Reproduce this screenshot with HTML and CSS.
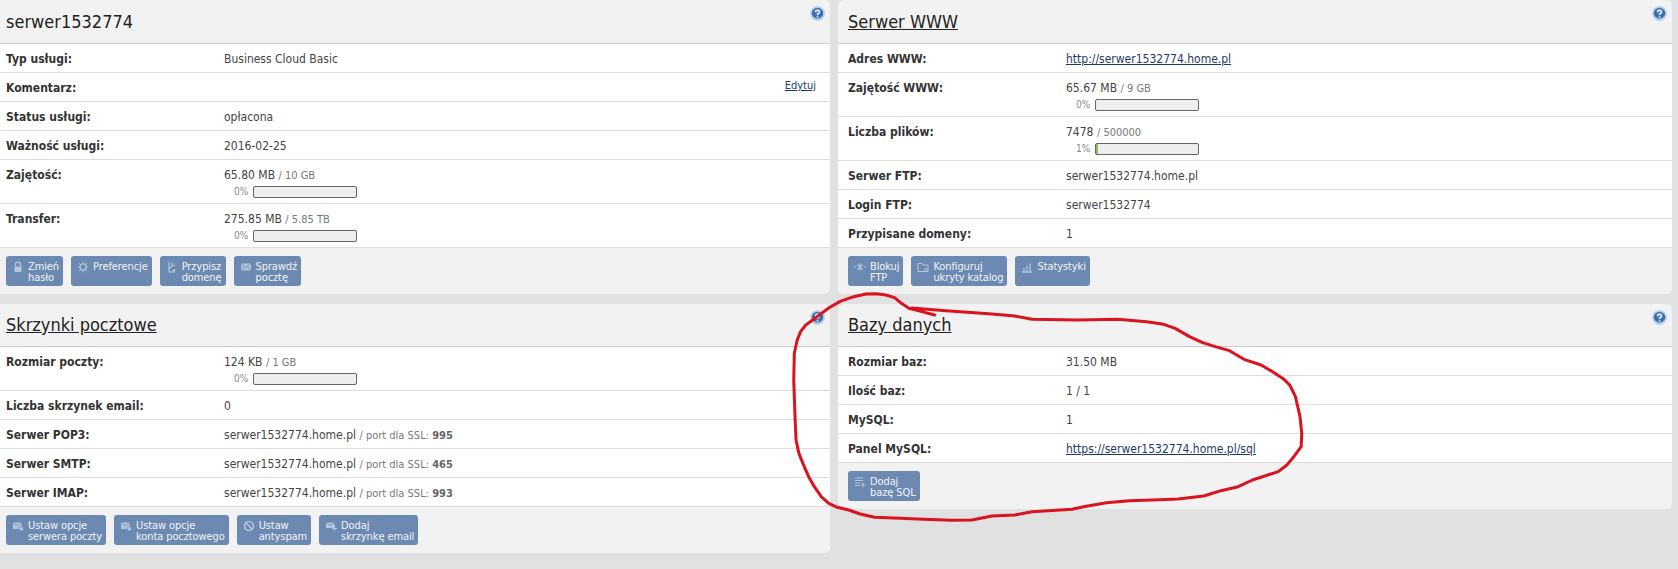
FILE: index.html
```html
<!DOCTYPE html>
<html lang="pl">
<head>
<meta charset="utf-8">
<title>serwer1532774</title>
<link rel="stylesheet" href="styles.css">
</head>
<body>
<svg width="0" height="0" class="defs">
  <defs>
    <radialGradient id="hg" cx="50%" cy="35%" r="65%"><stop offset="0" stop-color="#5f93cf"/><stop offset="0.7" stop-color="#2f66a8"/><stop offset="1" stop-color="#a9c6e4"/></radialGradient>
    <symbol id="help" viewBox="0 0 14 14"><circle cx="7" cy="7" r="7" fill="#bcd3ea"/><circle cx="7" cy="7" r="5.4" fill="url(#hg)"/><path d="M5.2 5.5c0-2.2 3.6-2.2 3.6 0 0 1.4-1.8 1.4-1.8 2.8" fill="none" stroke="#fff" stroke-width="1.3"/><rect x="6.3" y="9.2" width="1.4" height="1.4" fill="#fff"/></symbol>
  </defs>
</svg>
<main class="grid">
  <section class="panel">
    <svg class="help"><use href="#help"/></svg>
    <h2 class="title">serwer1532774</h2>
    <div class="row"><div class="label">Typ usługi:</div><div class="value">Business Cloud Basic</div></div>
    <div class="row"><div class="label">Komentarz:</div><div class="value"></div><a class="edit" href="#">Edytuj</a></div>
    <div class="row"><div class="label">Status usługi:</div><div class="value">opłacona</div></div>
    <div class="row"><div class="label">Ważność usługi:</div><div class="value">2016-02-25</div></div>
    <div class="row tall"><div class="label">Zajętość:</div><div class="value">65.80 MB <span class="dim">/ 10 GB</span><div class="meter"><span class="pct">0%</span><span class="bar"></span></div></div></div>
    <div class="row tall"><div class="label">Transfer:</div><div class="value">275.85 MB <span class="dim">/ 5.85 TB</span><div class="meter"><span class="pct">0%</span><span class="bar"></span></div></div></div>
    <div class="actions">
      <a class="btn" href="#"><svg class="ico" viewBox="0 0 12 12"><path d="M3.5 5.5V3.6a2.5 2.5 0 0 1 5 0v1.9" fill="none" stroke="currentColor" stroke-width="1.3"/><rect x="2.5" y="5.5" width="7" height="5.5" rx="1" fill="currentColor"/></svg><span>Zmień<br>hasło</span></a>
      <a class="btn" href="#"><svg class="ico" viewBox="0 0 12 12"><circle cx="6" cy="6" r="3" fill="none" stroke="currentColor" stroke-width="1.2"/><path d="M6 .8v2M6 9.2v2M.8 6h2M9.2 6h2M2.3 2.3l1.4 1.4M8.3 8.3l1.4 1.4M2.3 9.7l1.4-1.4M8.3 3.7l1.4-1.4" stroke="currentColor" stroke-width="1.1"/></svg><span>Preferencje</span></a>
      <a class="btn" href="#"><svg class="ico" viewBox="0 0 12 12"><path d="M3 1v10h6M3 8l3-3M6 1.5v3h3M8 8v3M6.5 9.5h3" fill="none" stroke="currentColor" stroke-width="1.1"/></svg><span>Przypisz<br>domenę</span></a>
      <a class="btn" href="#"><svg class="ico" viewBox="0 0 12 12"><rect x="1" y="2.5" width="10" height="7" fill="currentColor"/><path d="M1 2.5l5 4 5-4M1 9.5l3.5-4M11 9.5l-3.5-4" fill="none" stroke="#6b88b1" stroke-width=".8"/></svg><span>Sprawdź<br>pocztę</span></a>
    </div>
  </section>

  <section class="panel">
    <svg class="help"><use href="#help"/></svg>
    <h2 class="title"><a href="#">Serwer WWW</a></h2>
    <div class="row"><div class="label">Adres WWW:</div><div class="value"><a class="link" href="#">http://serwer1532774.home.pl</a></div></div>
    <div class="row tall"><div class="label">Zajętość WWW:</div><div class="value">65.67 MB <span class="dim">/ 9 GB</span><div class="meter"><span class="pct">0%</span><span class="bar"></span></div></div></div>
    <div class="row tall"><div class="label">Liczba plików:</div><div class="value">7478 <span class="dim">/ 500000</span><div class="meter"><span class="pct">1%</span><span class="bar"><span class="fill"></span></span></div></div></div>
    <div class="row"><div class="label">Serwer FTP:</div><div class="value">serwer1532774.home.pl</div></div>
    <div class="row"><div class="label">Login FTP:</div><div class="value">serwer1532774</div></div>
    <div class="row"><div class="label">Przypisane domeny:</div><div class="value">1</div></div>
    <div class="actions">
      <a class="btn" href="#"><svg class="ico" viewBox="0 0 12 12"><path d="M0 6h2M10 6h2M6 2.5v7M3.5 3.5l5 5M8.5 3.5l-5 5" stroke="currentColor" stroke-width="1.1"/></svg><span>Blokuj<br>FTP</span></a>
      <a class="btn" href="#"><svg class="ico" viewBox="0 0 12 12"><path d="M1 2.5h4l1 1.5h5v6.5H1z" fill="none" stroke="currentColor" stroke-width="1"/><path d="M7 7l3 3M10 7l-3 3" stroke="currentColor" stroke-width="1"/></svg><span>Konfiguruj<br>ukryty katalog</span></a>
      <a class="btn" href="#"><svg class="ico" viewBox="0 0 12 12"><path d="M1 11h10M3 10V7M6 10V5M9 10V2.5" stroke="currentColor" stroke-width="1.3" fill="none"/></svg><span>Statystyki</span></a>
    </div>
  </section>

  <section class="panel lower">
    <svg class="help"><use href="#help"/></svg>
    <h2 class="title"><a href="#">Skrzynki pocztowe</a></h2>
    <div class="row tall"><div class="label">Rozmiar poczty:</div><div class="value">124 KB <span class="dim">/ 1 GB</span><div class="meter"><span class="pct">0%</span><span class="bar"></span></div></div></div>
    <div class="row"><div class="label">Liczba skrzynek email:</div><div class="value">0</div></div>
    <div class="row"><div class="label">Serwer POP3:</div><div class="value">serwer1532774.home.pl <span class="dim">/ port dla SSL: <b>995</b></span></div></div>
    <div class="row"><div class="label">Serwer SMTP:</div><div class="value">serwer1532774.home.pl <span class="dim">/ port dla SSL: <b>465</b></span></div></div>
    <div class="row"><div class="label">Serwer IMAP:</div><div class="value">serwer1532774.home.pl <span class="dim">/ port dla SSL: <b>993</b></span></div></div>
    <div class="actions">
      <a class="btn" href="#"><svg class="ico" viewBox="0 0 12 12"><rect x="1" y="2.5" width="8.5" height="6.5" fill="currentColor"/><path d="M1 2.5l4.2 3.5 4.3-3.5" fill="none" stroke="#6b88b1" stroke-width=".8"/><circle cx="9.3" cy="8.8" r="2.2" fill="currentColor" stroke="#6b88b1" stroke-width=".7"/></svg><span>Ustaw opcje<br>serwera poczty</span></a>
      <a class="btn" href="#"><svg class="ico" viewBox="0 0 12 12"><rect x="1" y="2.5" width="8.5" height="6.5" fill="currentColor"/><path d="M1 2.5l4.2 3.5 4.3-3.5" fill="none" stroke="#6b88b1" stroke-width=".8"/><circle cx="9.3" cy="8.8" r="2.2" fill="currentColor" stroke="#6b88b1" stroke-width=".7"/></svg><span>Ustaw opcje<br>konta pocztowego</span></a>
      <a class="btn" href="#"><svg class="ico" viewBox="0 0 12 12"><circle cx="6" cy="6" r="4.5" fill="none" stroke="currentColor" stroke-width="1.7"/><path d="M3 3l6 6" stroke="currentColor" stroke-width="1.5"/></svg><span>Ustaw<br>antyspam</span></a>
      <a class="btn" href="#"><svg class="ico" viewBox="0 0 12 12"><rect x="1" y="2.5" width="8" height="5.5" fill="currentColor"/><path d="M1 2.5l4 3 4-3" fill="none" stroke="#6b88b1" stroke-width=".8"/><path d="M9.5 5v6M7 8.5h5" stroke="currentColor" stroke-width="1.2"/></svg><span>Dodaj<br>skrzynkę email</span></a>
    </div>
  </section>

  <section class="panel lower">
    <svg class="help"><use href="#help"/></svg>
    <h2 class="title"><a href="#">Bazy danych</a></h2>
    <div class="row"><div class="label">Rozmiar baz:</div><div class="value">31.50 MB</div></div>
    <div class="row"><div class="label">Ilość baz:</div><div class="value">1 / 1</div></div>
    <div class="row"><div class="label">MySQL:</div><div class="value">1</div></div>
    <div class="row"><div class="label">Panel MySQL:</div><div class="value"><a class="link" href="#">https://serwer1532774.home.pl/sql</a></div></div>
    <div class="actions">
      <a class="btn" href="#"><svg class="ico" viewBox="0 0 12 12"><path d="M1 2h8M1 4.5h8M1 7h5M1 9.5h5M9 6.5v5M6.5 9h5" stroke="currentColor" stroke-width="1.1"/></svg><span>Dodaj<br>bazę SQL</span></a>
    </div>
  </section>
</main>
<svg class="scribble" viewBox="0 0 1568 867" preserveAspectRatio="none">
  <path d="M270 105L246 94L225 85L212 70L200 53L185 45L168 41L150 42L125 52L105 64L85 84L65 110L45 135L36 155L30 180L25 220L24 300L26 400L28 480L33 520L40 550L50 590L60 620L72 650L85 670L100 682L120 690L140 702L165 712L210 715L250 718L300 721L335 720L370 708L410 705L440 695L510 688L530 680L570 668L610 662L650 660L695 657L740 648L770 632L800 620L825 600L870 575L885 555L895 535L910 500L911 460L908 410L900 350L890 315L880 298L860 275L840 255L810 238L785 212L760 200L738 188L715 170L690 145L670 133L640 125L590 118L520 120L440 118L410 108L370 102L340 98L290 92L230 84"/>
</svg>
</body>
</html>
```
FILE: styles.css
```css
* { box-sizing: border-box; }
html, body { margin: 0; padding: 0; }
body {
  width: 1678px;
  height: 569px;
  overflow: hidden;
  position: relative;
  background: #e1e1e1;
  font-family: "DejaVu Sans Condensed", "DejaVu Sans", sans-serif;
  font-stretch: condensed;
  font-size: 12px;
  color: #444;
}
.defs { position: absolute; }
.grid {
  display: grid;
  grid-template-columns: 834px 834px;
  grid-template-rows: 295px auto;
  column-gap: 8px;
  row-gap: 9px;
  margin-left: -4px;
  align-items: start;
}
.panel {
  position: relative;
  background: #f2f2f2;
  border-radius: 5px;
}
.title {
  margin: 0;
  height: 44px;
  padding: 11px 10px 0;
  font-size: 18px;
  line-height: 22px;
  font-weight: normal;
  color: #222;
  border-bottom: 1px solid #ccc;
}
.lower .title { height: 43px; padding-top: 10px; }
.title a { color: #222; text-decoration: underline; }
.help {
  position: absolute;
  top: 6px;
  right: 5px;
  width: 15px;
  height: 15px;
}
.row {
  display: flex;
  position: relative;
  background: #fff;
  height: 29px;
  padding: 8px 10px 0;
  line-height: 14px;
  border-bottom: 1px solid #ddd;
}
.row.tall { height: 44px; }
.label { width: 218px; flex: none; font-weight: bold; color: #333; }
.value { flex: 1; }
.dim { font-size: 11px; color: #777; }
.dim b { color: #666; }
.link, .edit { color: #1d3a66; text-decoration: underline; }
.edit { font-size: 11px; margin-top: -2px; margin-right: 4px; }
.meter {
  display: flex;
  align-items: center;
  height: 12px;
  margin-top: 3px;
  padding-left: 10px;
}
.pct { width: 19px; font-size: 10px; color: #888; }
.bar {
  display: block;
  width: 104px;
  height: 12px;
  background: #eee;
  border: 1px solid #666;
  border-radius: 2px;
  overflow: hidden;
}
.fill { display: block; width: 2px; height: 100%; background: #8db765; }
.actions {
  display: flex;
  gap: 8px;
  padding: 8px 10px 8px;
  border-top: 1px solid #ccc;
  margin-top: -1px;
}
.btn {
  display: flex;
  height: 30px;
  padding: 5px 4px 0 6px;
  gap: 4px;
  background: #6c89b2;
  border-radius: 3px;
  color: #f2f5fa;
  font-size: 11px;
  line-height: 11px;
  letter-spacing: -0.1px;
  text-decoration: none;
  white-space: nowrap;
}
.ico { flex: none; width: 12px; height: 12px; color: #b4c6dc; }
.scribble {
  position: absolute;
  left: 780px;
  top: 280px;
  width: 898px;
  height: 289px;
  pointer-events: none;
}
.scribble path {
  fill: none;
  stroke: #d9141f;
  stroke-width: 3;
  stroke-linejoin: round;
  stroke-linecap: round;
  vector-effect: non-scaling-stroke;
}
```
